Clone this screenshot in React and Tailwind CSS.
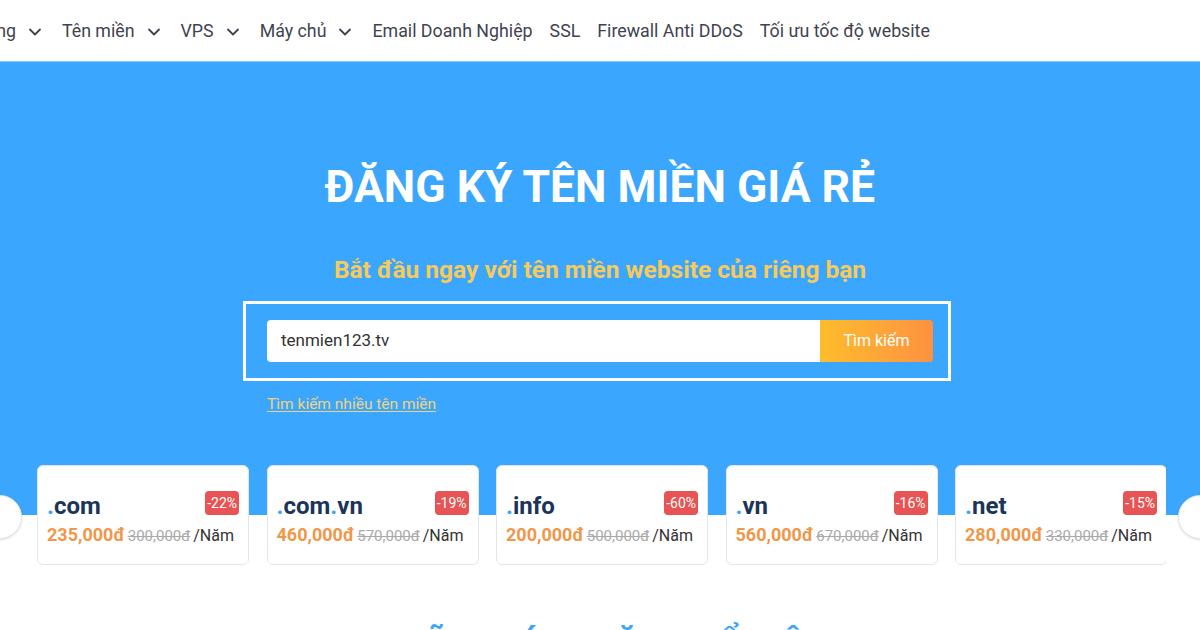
import { ChevronDown } from "lucide-react";

const navItems = [
  { label: "Hosting", drop: true },
  { label: "Tên miền", drop: true },
  { label: "VPS", drop: true },
  { label: "Máy chủ", drop: true },
  { label: "Email Doanh Nghiệp" },
  { label: "SSL" },
  { label: "Firewall Anti DDoS" },
  { label: "Tối ưu tốc độ website" },
];

const domains = [
  { parts: ["com"], off: "-22%", price: "235,000đ", old: "300,000đ" },
  { parts: ["com", "vn"], off: "-19%", price: "460,000đ", old: "570,000đ" },
  { parts: ["info"], off: "-60%", price: "200,000đ", old: "500,000đ" },
  { parts: ["vn"], off: "-16%", price: "560,000đ", old: "670,000đ" },
  { parts: ["net"], off: "-15%", price: "280,000đ", old: "330,000đ" },
];

const DomainCard = ({ d }) => (
  <div className="w-[212px] h-[100px] shrink-0 bg-white rounded-md border border-[#e3e6ea] pl-[9px] pr-[9px] pt-[24px]">
    <div className="flex items-start justify-between h-[30px]">
      <div className="text-[24px] font-bold text-[#1b3458] leading-[30px] pt-[1px]">
        {d.parts.map((p, i) => (
          <span key={i}>
            <span className="text-[#3aa6fd]">.</span>
            {p}
          </span>
        ))}
      </div>
      <span className="bg-[#e85353] text-white text-[14px] leading-[24px] px-[2px] rounded-[4px] mt-[1px]">{d.off}</span>
    </div>
    <div className="mt-[1px] flex items-baseline gap-[3px] whitespace-nowrap">
      <span className="text-[18px] font-bold text-[#f0974a]">{d.price}</span>
      <span className="text-[15px] text-[#a9a9a9] line-through">{d.old}</span>
      <span className="text-[16px] text-[#333]">/Năm</span>
    </div>
  </div>
);

export default function App() {
  return (
    <div className="w-[1200px] h-[630px] overflow-hidden bg-white font-['Roboto',sans-serif]">
      {/* top menu */}
      <div className="h-[62px] bg-white flex items-center pt-[2px] overflow-hidden border-b border-[#8ccbff]">
        <nav className="flex items-center ml-[-46px] gap-[17px] text-[17.8px] text-[#3f4350] whitespace-nowrap">
          {navItems.map((n) => (
            <div key={n.label} className="flex items-center gap-[9px]">
              <span>{n.label}</span>
              {n.drop && <ChevronDown size={20} strokeWidth={2.2} className="text-[#3f4350]" />}
            </div>
          ))}
        </nav>
      </div>

      {/* hero */}
      <div className="bg-[#3aa6fd] h-[453px] flex flex-col items-center">
        <h1 className="mt-[101px] text-white font-bold text-[44.5px] leading-[48px] whitespace-nowrap">
          ĐĂNG KÝ TÊN MIỀN GIÁ RẺ
        </h1>
        <p className="mt-[44px] text-[#f7ca5c] font-bold text-[24.5px] leading-[30px] whitespace-nowrap">
          Bắt đầu ngay với tên miền website của riêng bạn
        </p>
        <div className="self-start ml-[243px] mt-[16px] w-[708px] border-[3px] border-white pl-[21px] pr-[15px] py-[16px]">
          <div className="flex h-[42px] rounded-[4px] overflow-hidden">
            <div className="flex-1 bg-white flex items-center pl-[14px] text-[17px] text-[#333]">tenmien123.tv</div>
            <button className="w-[113px] bg-gradient-to-r from-[#fdbd2a] to-[#fd9140] text-white text-[16px]">Tìm kiếm</button>
          </div>
        </div>
        <div className="self-start ml-[267px] mt-[11px]">
          <a className="text-[15.5px] text-[#f3d37a] underline underline-offset-2">
            Tìm kiếm nhiều tên miền
          </a>
        </div>
      </div>

      {/* domain carousel */}
      <div className="relative -mt-[50px]">
        <div className="ml-[37px] w-[1129px] overflow-hidden flex gap-[17.5px]">
          {domains.map((d) => (
            <DomainCard key={d.off} d={d} />
          ))}
        </div>
        <div className="absolute left-[-22px] top-[30px] w-[44px] h-[44px] rounded-full bg-white border border-[#e6e6e6] shadow"></div>
        <div className="absolute right-[-22px] top-[30px] w-[44px] h-[44px] rounded-full bg-white border border-[#e6e6e6] shadow"></div>
      </div>

      <div className="mt-[58px] text-center text-[#3aa6fd] font-bold text-[34px] leading-[40px] whitespace-nowrap">
        NHỮNG TÍNH NĂNG NỔI BẬT
      </div>
    </div>
  );
}
